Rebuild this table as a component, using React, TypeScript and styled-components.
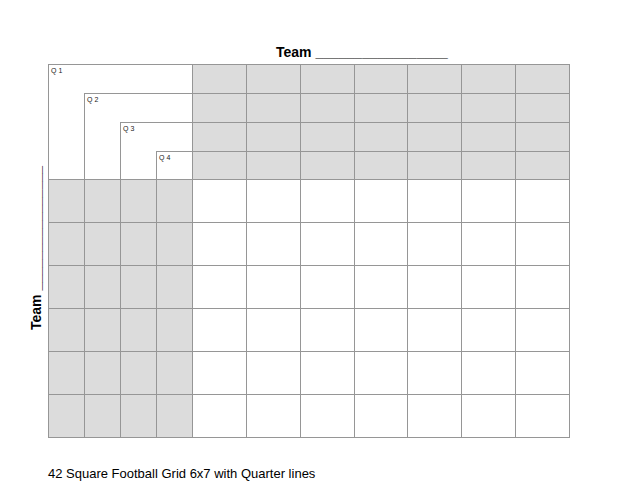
import { createGlobalStyle, styled } from 'styled-components';

const GlobalStyle = createGlobalStyle`
  html, body {
    margin: 0;
    padding: 0;
    background: #ffffff;
    font-family: "Liberation Sans", Arial, sans-serif;
    color: #000000;
  }
`;

const Page = styled.div`
  width: 641px;
  height: 495px;
  padding-top: 44px;
  box-sizing: border-box;
`;

const TopTitle = styled.div`
  font-size: 14px;
  font-weight: bold;
  line-height: 16px;
  padding-left: 276px;
  margin-bottom: 4px;
  white-space: pre;
`;

const Main = styled.div`
  display: flex;
`;

const SideColumn = styled.div`
  width: 48px;
  display: flex;
  justify-content: flex-end;
  align-items: center;
  padding-right: 4px;
  padding-bottom: 6px;
  box-sizing: border-box;
`;

const SideTitle = styled.div`
  writing-mode: vertical-rl;
  transform: rotate(180deg);
  font-size: 14px;
  font-weight: bold;
  line-height: 16px;
  white-space: pre;
`;

const Grid = styled.div`
  width: 522px;
  display: grid;
  grid-template-columns: repeat(4, 35px) repeat(7, 1fr);
  grid-template-rows: 28px 28px 28px 27px repeat(6, 42px);
  gap: 1px;
  border: 1px solid #969696;
  background: #969696;
  box-sizing: border-box;
`;

const Cell = styled.div<{ $shaded?: boolean }>`
  background: ${p => (p.$shaded ? '#dcdcdc' : '#ffffff')};
`;

const Corner = styled.div`
  grid-column: 1 / span 4;
  grid-row: 1 / span 4;
  background: #ffffff;
  display: flex;
`;

const Quarter = styled.div<{ $nested?: boolean }>`
  flex: 1;
  display: flex;
  position: relative;
  ${p =>
    p.$nested &&
    `
    margin-left: 35px;
    margin-top: 28px;
    border-left: 1px solid #969696;
    border-top: 1px solid #969696;
  `}
`;

const QLabel = styled.span`
  position: absolute;
  left: 2px;
  top: 2px;
  font-size: 7px;
  line-height: 7px;
  color: #222;
  white-space: pre;
`;

const Footer = styled.div`
  font-size: 13px;
  line-height: 16px;
  padding-left: 48px;
  margin-top: 28px;
`;

const blanks = '_________________';
const sideBlanks = '________________';

const renderQuarter = (n: number) => (
  <Quarter $nested={n > 1}>
    <QLabel>{`Q ${n}`}</QLabel>
    {n < 4 && renderQuarter(n + 1)}
  </Quarter>
);

export default function App() {
  const headerCells = [];
  for (let r = 0; r < 4; r++) {
    for (let c = 0; c < 7; c++) {
      headerCells.push(
        <Cell key={`h${r}-${c}`} $shaded style={{ gridRow: r + 1, gridColumn: c + 5 }} />
      );
    }
  }
  const bodyCells = [];
  for (let r = 0; r < 6; r++) {
    for (let c = 0; c < 11; c++) {
      bodyCells.push(
        <Cell key={`b${r}-${c}`} $shaded={c < 4} style={{ gridRow: r + 5, gridColumn: c + 1 }} />
      );
    }
  }

  return (
    <>
      <GlobalStyle />
      <Page>
        <TopTitle>{`Team ${blanks}`}</TopTitle>
        <Main>
          <SideColumn>
            <SideTitle>{`Team ${sideBlanks}`}</SideTitle>
          </SideColumn>
          <Grid>
            <Corner>{renderQuarter(1)}</Corner>
            {headerCells}
            {bodyCells}
          </Grid>
        </Main>
        <Footer>42 Square Football Grid 6x7 with Quarter lines</Footer>
      </Page>
    </>
  );
}
